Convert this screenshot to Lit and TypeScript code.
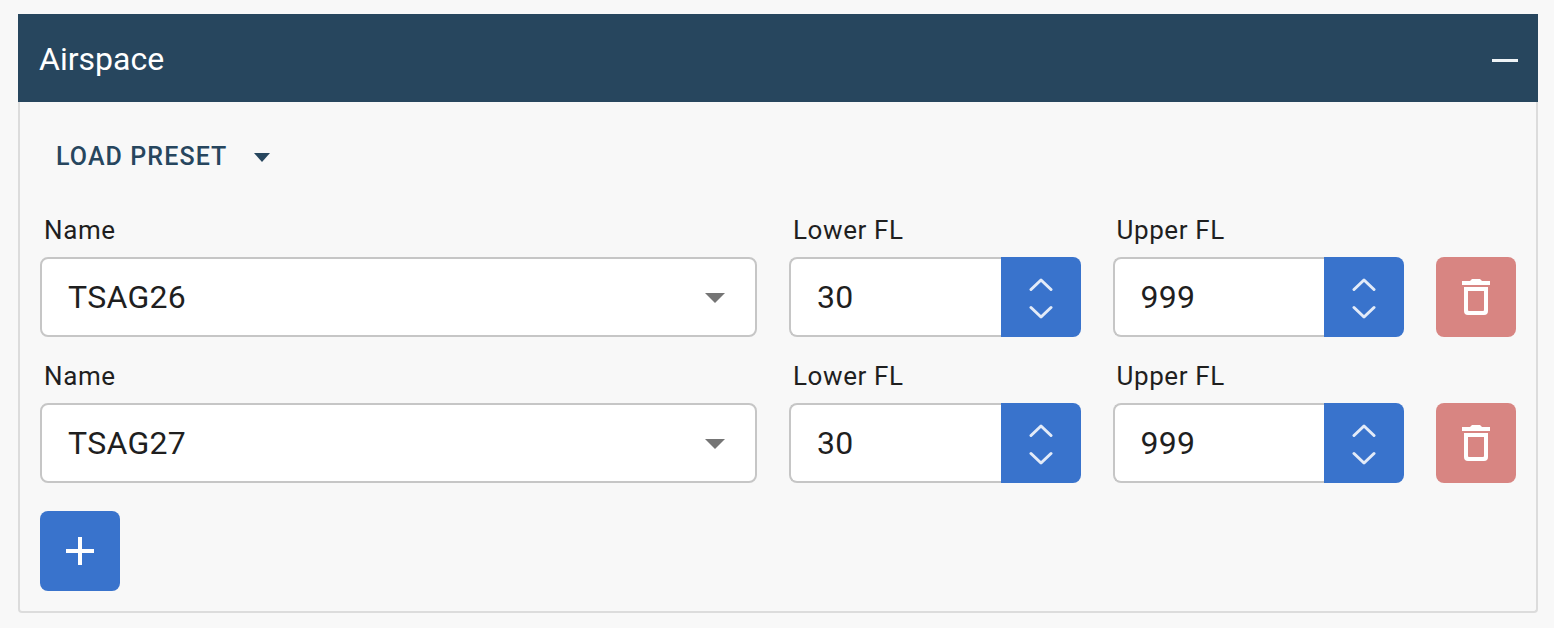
import { LitElement, html, css } from "lit";
import { customElement } from "lit/decorators.js";

const chevrons = html`<svg class="chev" viewBox="0 0 24 44" width="24" height="44" fill="none" stroke="#e3ebf8" stroke-width="3" stroke-linecap="round" stroke-linejoin="round"><path d="M2 14.500 L12 5 L22 14.500"/><path d="M2 32.500 L12 42 L22 32.500"/></svg>`;

const trash = html`<svg viewBox="0 0 28 36" width="28" height="36" fill="#fff"><path d="M0 2 H8 L10 0 H18 L20 2 H28 V6 H0 Z"/><path fill-rule="evenodd" d="M2 8 H26 V32 A4 4 0 0 1 22 36 H6 A4 4 0 0 1 2 32 Z M6 12 V31 A1 1 0 0 0 7 32 H21 A1 1 0 0 0 22 31 V12 Z"/></svg>`;

@customElement("app-root")
export class AppRoot extends LitElement {
  static styles = css`
    :host {
      display: block;
      min-height: 628px;
      background: #f8f8f8;
      padding: 14px 16px 15px 18px;
      box-sizing: border-box;
      font-family: Roboto, "Liberation Sans", sans-serif;
      color: #1f1f1f;
    }
    .panel {
      display: flex;
      flex-direction: column;
    }
    .header {
      height: 88px;
      box-sizing: border-box;
      background: #27465e;
      color: #fff;
      display: flex;
      align-items: center;
      justify-content: space-between;
      padding: 2px 20px 0 21px;
      font-size: 32px;
      font-weight: 400;
    }
    .minus {
      width: 26px;
      height: 3px;
      margin-top: 3px;
      background: #eef3f6;
    }
    .body {
      border: 2px solid #dcdcdc;
      border-top: none;
      border-radius: 0 0 4px 4px;
      padding: 18px 20px 20px;
      display: flex;
      flex-direction: column;
    }
    .preset {
      display: flex;
      align-items: center;
      height: 72px;
      padding-left: 16px;
      gap: 27px;
      color: #27465e;
      font-size: 25px;
      font-weight: 500;
      letter-spacing: 1.1px;
    }
    .rows {
      display: flex;
      flex-direction: column;
    }
    .row {
      display: grid;
      grid-template-columns: 717px 291.500px 291.500px 80px;
      column-gap: 32px;
      align-items: end;
      height: 146px;
    }
    .row:first-child {
      height: 145px;
    }
    .field {
      display: flex;
      flex-direction: column;
    }
    .label {
      font-size: 26px;
      line-height: 30px;
      padding: 0 4px 12px;
      letter-spacing: 0.6px;
    }
    .box {
      height: 80px;
      box-sizing: border-box;
      background: #fff;
      border: 2px solid #c6c6c6;
      border-radius: 8px;
      display: flex;
      align-items: center;
      justify-content: space-between;
      font-size: 32px;
      padding: 0 30px 0 26px;
      letter-spacing: 0.3px;
    }
    .caret {
      width: 0;
      height: 0;
      margin-top: 2px;
      border-left: 10px solid transparent;
      border-right: 10px solid transparent;
      border-top: 10px solid #757575;
    }
    .caret.dark {
      border-top-color: #27465e;
      border-left-width: 8px;
      border-right-width: 8px;
      border-top-width: 9px;
    }
    .number {
      display: flex;
      height: 80px;
    }
    .number .box {
      flex: 1;
      border-right: none;
      border-radius: 8px 0 0 8px;
    }
    .spin {
      width: 80px;
      height: 80px;
      background: #3973cc;
      border-radius: 0 8px 8px 0;
      display: flex;
      align-items: center;
      justify-content: center;
    }
    .square {
      width: 80px;
      height: 80px;
      border-radius: 8px;
      display: flex;
      align-items: center;
      justify-content: center;
    }
    .del {
      background: #d88582;
    }
    .add {
      background: #3973cc;
      margin-top: 28px;
    }
  `;

  private row(name: string) {
    return html`<div class="row">
      <div class="field">
        <div class="label">Name</div>
        <div class="box"><span>${name}</span><span class="caret"></span></div>
      </div>
      ${["Lower FL", "Upper FL"].map(
        (l, i) => html`<div class="field">
          <div class="label">${l}</div>
          <div class="number">
            <div class="box"><span>${i ? "999" : "30"}</span></div>
            <div class="spin">${chevrons}</div>
          </div>
        </div>`
      )}
      <div class="square del">${trash}</div>
    </div>`;
  }

  render() {
    return html`<div class="panel">
      <div class="header"><span>Airspace</span><span class="minus"></span></div>
      <div class="body">
        <div class="preset"><span>LOAD PRESET</span><span class="caret dark"></span></div>
        <div class="rows">${this.row("TSAG26")}${this.row("TSAG27")}</div>
        <div class="square add">
          <svg viewBox="0 0 28 28" width="28" height="28" fill="#fff"><path d="M12 0 H16 V12 H28 V16 H16 V28 H12 V16 H0 V12 H12 Z"/></svg>
        </div>
      </div>
    </div>`;
  }
}
